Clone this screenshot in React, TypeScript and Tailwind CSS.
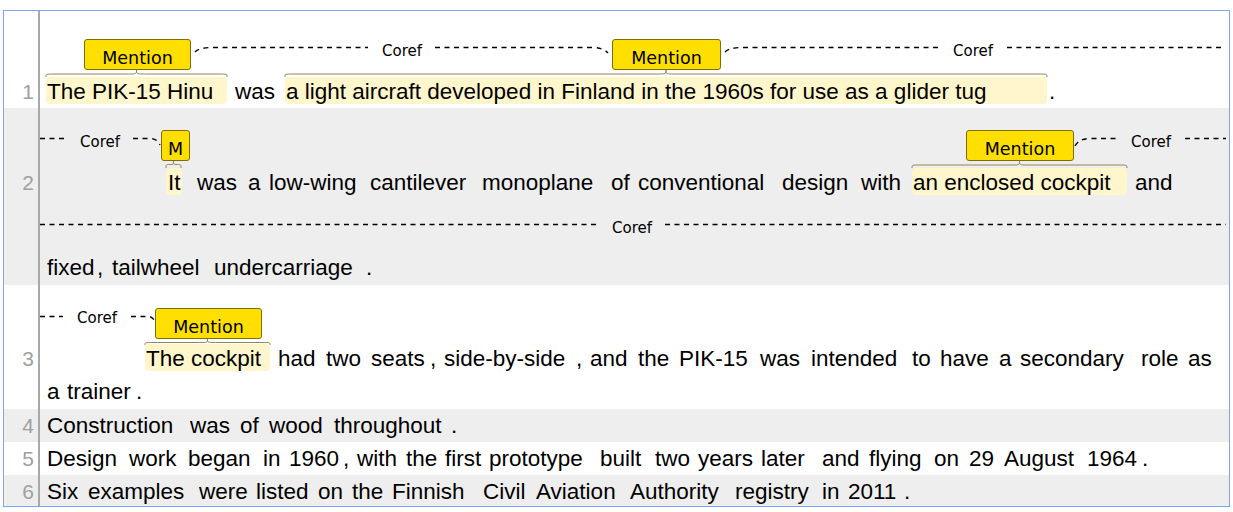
import React from "react";

function brace(x1: number, x2: number, tip: number, lvl: number, end: number) {
  const m = (x1 + x2) / 2;
  const r = Math.min(8, (x2 - x1) / 4);
  return `M${x1},${end} C${x1},${lvl} ${x1},${lvl} ${x1 + r},${lvl} L${m - r},${lvl} C${m},${lvl} ${m},${lvl} ${m},${tip} C${m},${lvl} ${m},${lvl} ${m + r},${lvl} L${x2 - r},${lvl} C${x2},${lvl} ${x2},${lvl} ${x2},${end}`;
}

const BR = "#948553";

function T({ w = "", children }: { w?: string; children: React.ReactNode }) {
  return <span className={`shrink-0 whitespace-nowrap leading-[33px] ${w}`}>{children}</span>;
}

function H({ w, children }: { w: string; children: React.ReactNode }) {
  return (
    <span
      className={`shrink-0 whitespace-nowrap mt-[2px] h-[27px] leading-[29px] rounded-[4px] bg-[#fff6cc] ${w}`}
    >
      {children}
    </span>
  );
}

function Line({ pl, children }: { pl: string; children: React.ReactNode }) {
  return <div className={`flex h-[33px] ${pl}`}>{children}</div>;
}

function Label({ cls, children }: { cls: string; children: React.ReactNode }) {
  return (
    <div
      className={`absolute h-[31px] rounded-[3px] border border-[#7d6c12] bg-[#ffdf00] pt-[10px] text-center font-['DejaVu_Sans',sans-serif] text-[17.5px] leading-[17px] text-black ${cls}`}
    >
      {children}
    </div>
  );
}

function Coref({ cls }: { cls: string }) {
  return (
    <div
      className={`absolute font-['DejaVu_Sans',sans-serif] text-[15px] leading-[15px] text-black ${cls}`}
    >
      Coref
    </div>
  );
}

function Row({
  bg,
  num,
  pt,
  pb = "",
  children,
}: {
  bg: string;
  num: string;
  pt: string;
  pb?: string;
  children: React.ReactNode;
}) {
  return (
    <div className={`flex ${bg}`}>
      <div
        className={`w-[36px] shrink-0 border-r-2 border-[#a8a8a8] pr-[4px] text-right text-[21px] leading-[33px] text-[#a0a0a0] ${pt}`}
      >
        {num}
      </div>
      <div className={`relative flex-1 ${pt} ${pb}`}>{children}</div>
    </div>
  );
}

const dash = { stroke: "#000", fill: "none", strokeWidth: 1.4, strokeDasharray: "5,4.5" };

export default function App() {
  return (
    <div className="min-h-screen bg-white pl-[3px] pt-[10px]">
      <div className="h-[497px] w-[1227px] overflow-hidden border border-[#7fa2ff] bg-white font-['Liberation_Sans',Arial,sans-serif] text-[22.5px] text-black">
        {/* Row 1 */}
        <Row bg="bg-white" num="1" pt="pt-[64px]">
          <Line pl="pl-[6px]">
            <H w="w-[181px] pl-[1px]">The PIK-15 Hinu</H>
            <T w="ml-[8px] w-[50px]">was</T>
            <H w="w-[762px] pl-[1px]">a light aircraft developed in Finland in the 1960s for use as a glider tug</H>
            <T w="ml-[2px]">.</T>
          </Line>
          <svg className="absolute left-0 top-0 overflow-visible" width={1188} height={97}>
            <path d={brace(6, 187, 59, 63, 66)} stroke={BR} fill="none" />
            <path d={brace(245, 1007, 59, 63, 66)} stroke={BR} fill="none" />
            <path d="M155,41 Q159,36.5 173,36.5 L328,36.5 M395,36.5 L552,36.5 Q563,36.5 568,42" {...dash} />
            <path d="M685,41 Q689,36.5 703,36.5 L898,36.5 M967,36.5 L1182,36.5" {...dash} />
          </svg>
          <Label cls="left-[44px] top-[28px] w-[107px]">Mention</Label>
          <Label cls="left-[572px] top-[28px] w-[109px]">Mention</Label>
          <Coref cls="left-[342px] top-[33px]" />
          <Coref cls="left-[913px] top-[33px]" />
        </Row>

        {/* Row 2 */}
        <Row bg="bg-[#eeeeee]" num="2" pt="pt-[58px]" pb="pb-[1px]">
          <div className="flex flex-col gap-[52px]">
            <Line pl="pl-[126px]">
              <H w="w-[16px] pl-[2px]">It</H>
              <T w="ml-[15px] w-[51px]">was</T>
              <T w="w-[21px]">a</T>
              <T w="w-[101px]">low-wing</T>
              <T w="w-[112px]">cantilever</T>
              <T w="w-[129px]">monoplane</T>
              <T w="w-[27px]">of</T>
              <T w="w-[144px]">conventional</T>
              <T w="w-[79px]">design</T>
              <T w="w-[51px]">with</T>
              <H w="w-[215px] pl-[1px]">an enclosed cockpit</H>
              <T w="ml-[8px]">and</T>
            </Line>
            <Line pl="pl-[7px]">
              <T w="w-[50px]">fixed</T>
              <T w="w-[15px]">,</T>
              <T w="w-[102px]">tailwheel</T>
              <T w="w-[152px]">undercarriage</T>
              <T>.</T>
            </Line>
          </div>
          <svg className="absolute left-0 top-0 overflow-visible" width={1188} height={177}>
            <path d={brace(126, 141, 53, 56.5, 60)} stroke={BR} fill="none" />
            <path d={brace(872, 1087, 53, 57, 60)} stroke={BR} fill="none" />
            <path d="M0,30.5 L28,30.5 M93,30.5 L110,30.5 Q117,30.5 120,37" {...dash} />
            <path d="M1035,38 Q1039,30.5 1050,30.5 L1077,30.5 M1145,30.5 L1186,30.5" {...dash} />
            <path d="M0,116.5 L559,116.5 M625,116.5 L1186,116.5" {...dash} />
          </svg>
          <Label cls="left-[121px] top-[22px] w-[29px]">M</Label>
          <Label cls="left-[926px] top-[22px] w-[108px]">Mention</Label>
          <Coref cls="left-[40px] top-[27px]" />
          <Coref cls="left-[1091px] top-[27px]" />
          <Coref cls="left-[572px] top-[113px]" />
        </Row>

        {/* Row 3 */}
        <Row bg="bg-white" num="3" pt="pt-[57px]" pb="pb-[1px]">
          <Line pl="pl-[105px]">
            <H w="w-[125px] pl-[1px]">The cockpit</H>
            <T w="ml-[8px] w-[48px]">had</T>
            <T w="w-[45px]">two</T>
            <T w="w-[59px]">seats</T>
            <T w="w-[14px]">,</T>
            <T w="w-[132px]">side-by-side</T>
            <T w="w-[14px]">,</T>
            <T w="w-[48px]">and</T>
            <T w="w-[41px]">the</T>
            <T w="w-[81px]">PIK-15</T>
            <T w="w-[51px]">was</T>
            <T w="w-[101px]">intended</T>
            <T w="w-[28px]">to</T>
            <T w="w-[59px]">have</T>
            <T w="w-[21px]">a</T>
            <T w="w-[121px]">secondary</T>
            <T w="w-[47px]">role</T>
            <T>as</T>
          </Line>
          <Line pl="pl-[7px]">
            <T w="w-[20px]">a</T>
            <T w="w-[69px]">trainer</T>
            <T>.</T>
          </Line>
          <svg className="absolute left-0 top-0 overflow-visible" width={1188} height={124}>
            <path d={brace(105, 230, 54, 57.5, 60)} stroke={BR} fill="none" />
            <path d="M0,31.5 L23,31.5 M91,31.5 L108,31.5 Q113,31.5 115,37" {...dash} />
          </svg>
          <Label cls="left-[115px] top-[23px] w-[107px]">Mention</Label>
          <Coref cls="left-[37px] top-[26px]" />
        </Row>

        {/* Row 4 */}
        <Row bg="bg-[#eeeeee]" num="4" pt="pt-0">
          <Line pl="pl-[7px]">
            <T w="w-[143px]">Construction</T>
            <T w="w-[50px]">was</T>
            <T w="w-[29px]">of</T>
            <T w="w-[65px]">wood</T>
            <T w="w-[117px]">throughout</T>
            <T>.</T>
          </Line>
        </Row>

        {/* Row 5 */}
        <Row bg="bg-white" num="5" pt="pt-0">
          <Line pl="pl-[7px]">
            <T w="w-[82px]">Design</T>
            <T w="w-[59px]">work</T>
            <T w="w-[75px]">began</T>
            <T w="w-[26px]">in</T>
            <T w="w-[54px]">1960</T>
            <T w="w-[14px]">,</T>
            <T w="w-[49px]">with</T>
            <T w="w-[39px]">the</T>
            <T w="w-[44px]">first</T>
            <T w="w-[111px]">prototype</T>
            <T w="w-[55px]">built</T>
            <T w="w-[43px]">two</T>
            <T w="w-[63px]">years</T>
            <T w="w-[61px]">later</T>
            <T w="w-[47px]">and</T>
            <T w="w-[65px]">flying</T>
            <T w="w-[35px]">on</T>
            <T w="w-[35px]">29</T>
            <T w="w-[83px]">August</T>
            <T w="w-[55px]">1964</T>
            <T>.</T>
          </Line>
        </Row>

        {/* Row 6 */}
        <Row bg="bg-[#eeeeee]" num="6" pt="pt-0">
          <Line pl="pl-[7px]">
            <T w="w-[41px]">Six</T>
            <T w="w-[111px]">examples</T>
            <T w="w-[57px]">were</T>
            <T w="w-[62px]">listed</T>
            <T w="w-[34px]">on</T>
            <T w="w-[40px]">the</T>
            <T w="w-[91px]">Finnish</T>
            <T w="w-[53px]">Civil</T>
            <T w="w-[94px]">Aviation</T>
            <T w="w-[105px]">Authority</T>
            <T w="w-[87px]">registry</T>
            <T w="w-[26px]">in</T>
            <T w="w-[56px]">2011</T>
            <T>.</T>
          </Line>
        </Row>
      </div>
    </div>
  );
}
